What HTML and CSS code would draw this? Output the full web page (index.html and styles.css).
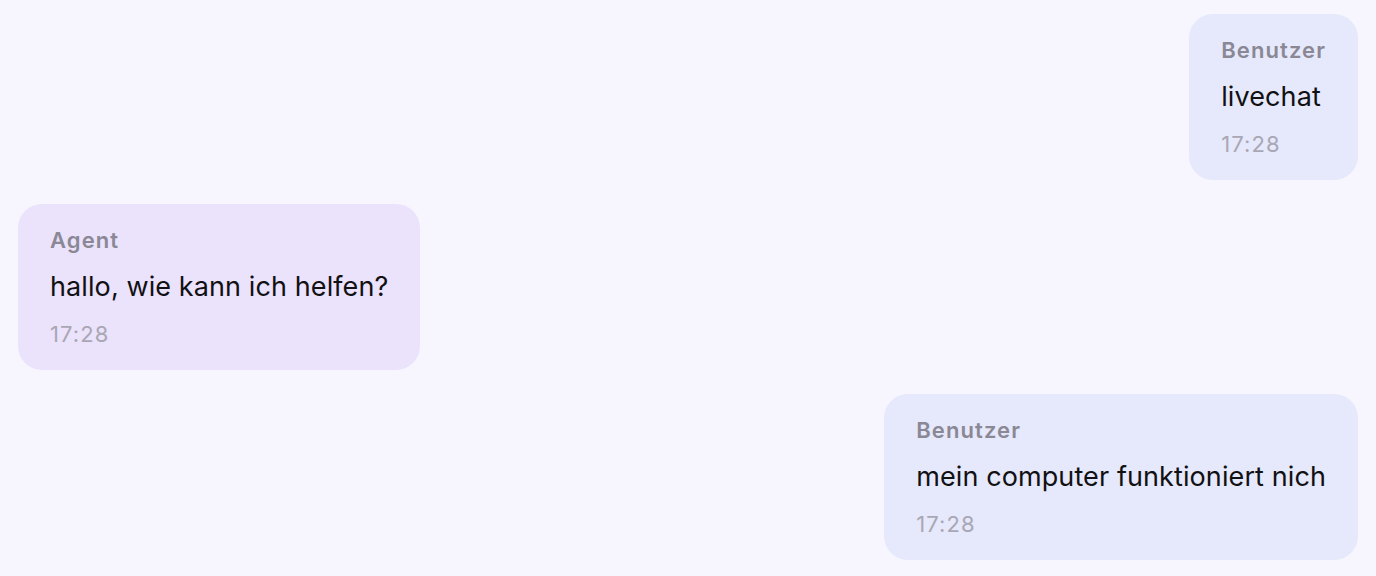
FILE: index.html
```html
<!DOCTYPE html>
<html lang="de">
<head>
    <meta charset="UTF-8">
    <meta name="viewport" content="width=device-width, initial-scale=1.0">
    <title>Livechat</title>
    <link rel="stylesheet" href="styles.css">
</head>
<body>
    <div class="chat">
        <div class="msg user">
            <div class="sender">Benutzer</div>
            <div class="text">livechat</div>
            <div class="time">17:28</div>
        </div>
        <div class="msg agent">
            <div class="sender">Agent</div>
            <div class="text">hallo, wie kann ich helfen?</div>
            <div class="time">17:28</div>
        </div>
        <div class="msg user">
            <div class="sender">Benutzer</div>
            <div class="text">mein computer funktioniert nich</div>
            <div class="time">17:28</div>
        </div>
    </div>
</body>
</html>
```

FILE: styles.css
```css
body {
    font-family: Inter, "Noto Sans", sans-serif;
    background-color: #f7f6fe;
    margin: 0;
}
.chat {
    display: flex;
    flex-direction: column;
    gap: 24px;
    padding: 14px 18px;
}
.msg {
    display: flex;
    flex-direction: column;
    gap: 19px;
    padding: 24px 32px;
    border-radius: 24px;
    max-width: 70%;
}
.user {
    align-self: flex-end;
    background-color: #e6e8fb;
}
.agent {
    align-self: flex-start;
    background-color: #ebe2fc;
}
.sender {
    font-size: 22px;
    line-height: 24px;
    font-weight: 600;
    letter-spacing: 1.1px;
    color: #8a8894;
}
.text {
    font-size: 27px;
    line-height: 32px;
    letter-spacing: 0.1px;
    color: #111114;
}
.time {
    font-size: 22px;
    line-height: 24px;
    letter-spacing: 1.1px;
    color: #a9a7b4;
}
```
